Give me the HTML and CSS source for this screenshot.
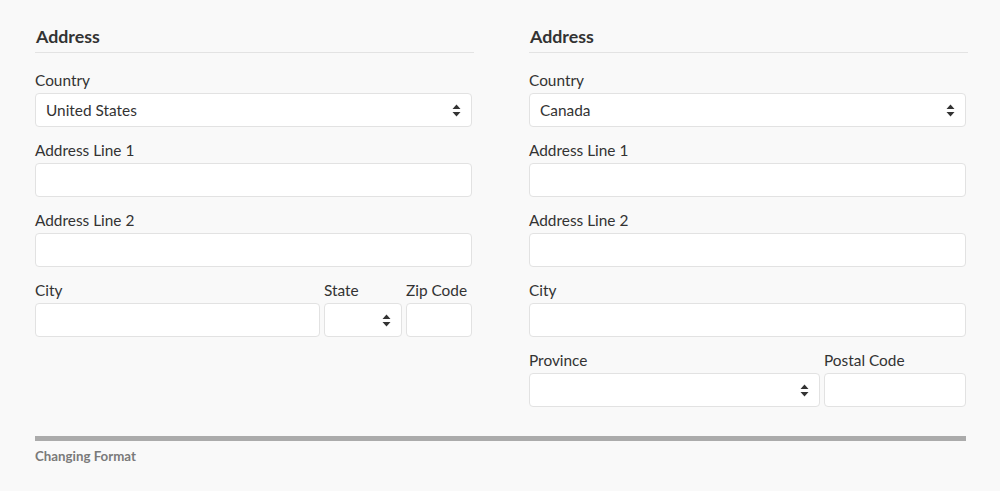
FILE: index.html
```html
<!DOCTYPE html>
<html>
<head>
<meta charset="utf-8">
<link rel="stylesheet" href="styles.css">
</head>
<body>
<div class="page">
  <div class="columns">
    <section class="col">
      <h2 class="heading">Address</h2>
      <div class="field">
        <label class="label">Country</label>
        <div class="input select"><span>United States</span><svg class="arrows" width="9" height="13" viewBox="0 0 9 13"><path d="M4.5 0.5 L8.5 5 L0.5 5 Z M0.5 8 L8.5 8 L4.5 12.5 Z" fill="#333"/></svg></div>
      </div>
      <div class="field">
        <label class="label">Address Line 1</label>
        <div class="input"></div>
      </div>
      <div class="field">
        <label class="label">Address Line 2</label>
        <div class="input"></div>
      </div>
      <div class="row">
        <div class="field grow">
          <label class="label">City</label>
          <div class="input"></div>
        </div>
        <div class="field state">
          <label class="label">State</label>
          <div class="input select"><span></span><svg class="arrows" width="9" height="13" viewBox="0 0 9 13"><path d="M4.5 0.5 L8.5 5 L0.5 5 Z M0.5 8 L8.5 8 L4.5 12.5 Z" fill="#333"/></svg></div>
        </div>
        <div class="field zip">
          <label class="label">Zip Code</label>
          <div class="input"></div>
        </div>
      </div>
    </section>
    <section class="col">
      <h2 class="heading">Address</h2>
      <div class="field">
        <label class="label">Country</label>
        <div class="input select"><span>Canada</span><svg class="arrows" width="9" height="13" viewBox="0 0 9 13"><path d="M4.5 0.5 L8.5 5 L0.5 5 Z M0.5 8 L8.5 8 L4.5 12.5 Z" fill="#333"/></svg></div>
      </div>
      <div class="field">
        <label class="label">Address Line 1</label>
        <div class="input"></div>
      </div>
      <div class="field">
        <label class="label">Address Line 2</label>
        <div class="input"></div>
      </div>
      <div class="field">
        <label class="label">City</label>
        <div class="input"></div>
      </div>
      <div class="row">
        <div class="field grow">
          <label class="label">Province</label>
          <div class="input select"><span></span><svg class="arrows" width="9" height="13" viewBox="0 0 9 13"><path d="M4.5 0.5 L8.5 5 L0.5 5 Z M0.5 8 L8.5 8 L4.5 12.5 Z" fill="#333"/></svg></div>
        </div>
        <div class="field postal">
          <label class="label">Postal Code</label>
          <div class="input"></div>
        </div>
      </div>
    </section>
  </div>
  <div class="bar"></div>
  <div class="caption">Changing Format</div>
</div>
</body>
</html>
```

FILE: styles.css
```css
html, body {
  margin: 0;
  padding: 0;
  background: #f9f9f9;
}
body {
  font-family: Lato, "Open Sans", sans-serif;
  color: #333;
}
.page {
  padding: 25px 34px 0 35px;
}
.columns {
  display: flex;
  gap: 57px;
}
.col {
  width: 437px;
  display: flex;
  flex-direction: column;
}
.heading {
  margin: 0 -2px 17px 0;
  padding: 0 0 5px 1px;
  font-size: 17.8px;
  line-height: 22px;
  font-weight: 700;
  color: #333;
  border-bottom: 1px solid #e3e3e3;
}
.field {
  display: flex;
  flex-direction: column;
  margin-bottom: 13px;
}
.label {
  font-size: 15.4px;
  line-height: 20px;
  margin-bottom: 3px;
  color: #333;
}
.input {
  box-sizing: border-box;
  height: 34px;
  background: #fff;
  border: 1px solid #e2e2e2;
  border-radius: 4px;
  font-size: 15.4px;
  line-height: 32px;
  padding: 0 10px;
  color: #333;
}
.select {
  display: flex;
  align-items: center;
  justify-content: space-between;
  padding-right: 10px;
}
.arrows {
  display: block;
  flex: none;
}
.row {
  display: flex;
  gap: 4px;
}
.grow {
  flex: 1;
}
.state {
  width: 78px;
}
.zip {
  width: 66px;
}
.postal {
  width: 142px;
}
.bar {
  margin-top: 16px;
  width: 931px;
  height: 5px;
  background: #ababab;
}
.caption {
  margin-top: 7px;
  font-size: 13.3px;
  line-height: 16px;
  font-weight: 700;
  color: #7a7a7a;
}
```
